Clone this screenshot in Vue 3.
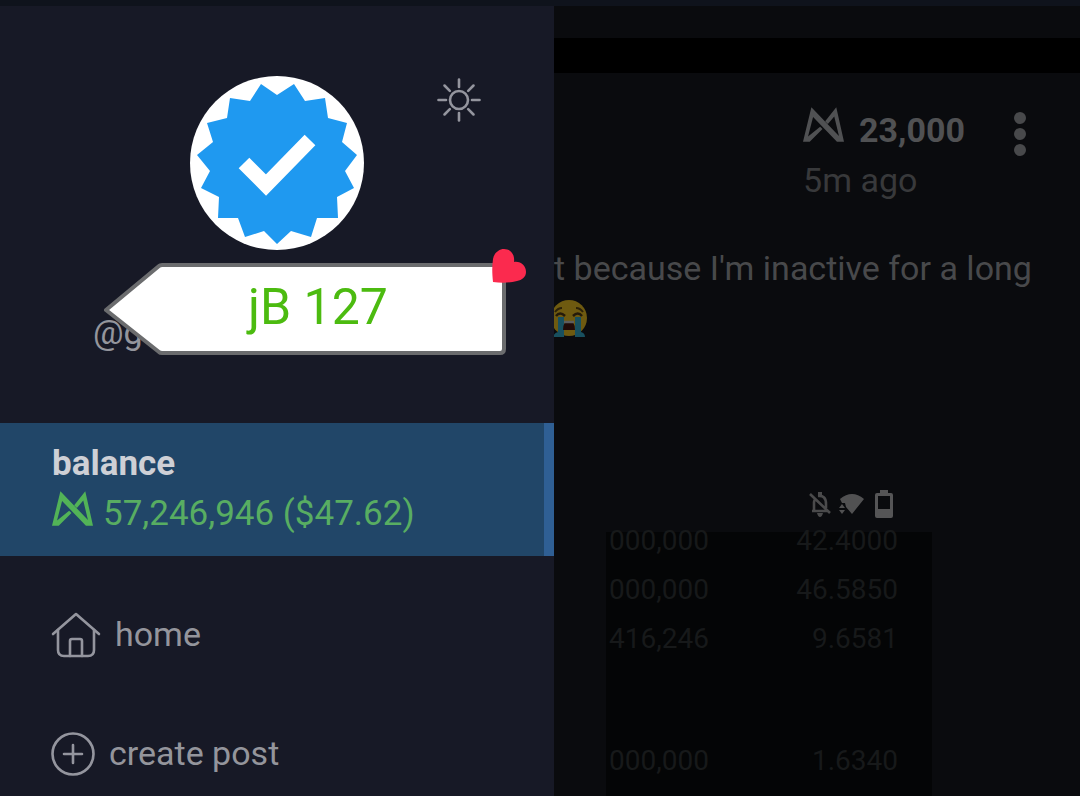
<script setup>
const logo =
  'M0 103 L25 0 L107 86 L93 28 L74 50 L66 42 L99 0 L122 103 L101 103 L30 29 L15 87 L51 58 L58 65 L20 103 Z'

const menu = [
  { id: 'home', label: 'home' },
  { id: 'create', label: 'create post' },
]

const rows = [
  { id: 1, amount: '000,000', price: '42.4000' },
  { id: 2, amount: '000,000', price: '46.5850' },
  { id: 3, amount: '416,246', price: '9.6581' },
  { id: 4, amount: '000,000', price: '1.6340', spaced: true },
]

const rays = [0, 45, 90, 135, 180, 225, 270, 315]
</script>

<template>
  <div class="app">
    <div class="status-strip"></div>
    <div class="columns">
      <aside class="drawer">
        <header class="profile">
          <svg class="avatar" viewBox="0 0 174 174" role="img" aria-label="Profile picture">
            <circle cx="87" cy="87" r="87" fill="#fff" />
            <path
              fill="#1f99f0"
              d="M87 19 L104 8 L115 25 L135 22 L138 42 L157 47 L152 66 L167 79 L155 95 L164 112 L147 121 L148 142 L127 142 L121 161 L101 155 L87 168 L74 155 L55 161 L48 142 L28 142 L29 121 L11 112 L20 95 L7 79 L23 66 L17 47 L37 42 L40 22 L60 25 L71 8 Z"
            />
            <path fill="none" stroke="#fff" stroke-width="15" d="M54 87 L76 109 L120 64" />
          </svg>
          <button class="theme" type="button" aria-label="Toggle theme">
            <svg viewBox="0 0 44 44">
              <circle cx="22" cy="22" r="9" />
              <path v-for="r in rays" :key="r" d="M22 1.5 V9" :transform="`rotate(${r} 22 22)`" />
            </svg>
          </button>
          <p class="handle">@g</p>
          <div class="sticker">
            <svg class="sticker-shape" viewBox="0 0 402 92" preserveAspectRatio="none">
              <path
                d="M2 47 L55 3 Q56 2 58 2 H400 V86 Q400 90 396 90 H58 Q56 90 55 89 Z"
                fill="#fff"
                stroke="#6b6c6e"
                stroke-width="4"
                stroke-linejoin="round"
              />
            </svg>
            <span class="sticker-text">jB 127</span>
            <svg class="heart" viewBox="0 0 34 34">
              <path
                fill="#fb2a4e"
                d="M1 33 C0 24 0 17 1 10 C2 4 7 0 12 0 C19 0 23 6 22 13 C29 12 34 17 34 23 C34 28 30 31 25 32 C17 34 9 34 1 33 Z"
              />
            </svg>
          </div>
        </header>

        <a class="balance" href="#balance">
          <strong>balance</strong>
          <span class="amount">
            <svg class="logo" viewBox="0 0 122 103"><path :d="logo" /></svg>
            <span>57,246,946 ($47.62)</span>
          </span>
        </a>

        <nav class="menu">
          <a v-for="item in menu" :key="item.id" :href="`#${item.id}`">
            <svg v-if="item.id === 'home'" class="icon-home" viewBox="0 0 50 46">
              <path d="M2 22 L25 2 L48 22" />
              <path d="M7 18 V38 Q7 44 13 44 H37 Q43 44 43 38 V18" />
              <path d="M19 44 V29 Q19 27 21 27 H29 Q31 27 31 29 V44" />
            </svg>
            <svg v-else class="icon-create" viewBox="0 0 44 44">
              <circle cx="22" cy="22" r="20.5" />
              <path d="M22 13 V31 M13 22 H31" />
            </svg>
            <span>{{ item.label }}</span>
          </a>
        </nav>
      </aside>

      <main class="feed">
        <div class="feed-gap"></div>
        <article class="post">
          <header class="post-head">
            <div>
              <p class="score">
                <svg class="logo" viewBox="0 0 122 103"><path :d="logo" /></svg>
                <strong>23,000</strong>
              </p>
              <p class="time">5m ago</p>
            </div>
            <button class="more" type="button" aria-label="More options">
              <i></i><i></i><i></i>
            </button>
          </header>
          <p class="body">t because I'm inactive for a long</p>
          <svg class="emoji" viewBox="3 0 36 40" role="img" aria-label="Loudly crying face">
            <circle cx="18" cy="19" r="18" fill="#6e5a10" />
            <path d="M4 13 Q7 9 11 9 M25 9 Q29 9 32 13" fill="none" stroke="#2b2109" stroke-width="2" />
            <path d="M5 17 Q9 12 14 17 M22 17 Q27 12 31 17" fill="none" stroke="#241a0a" stroke-width="2.5" />
            <path d="M7 18 H13 V38 H2 Q3 34 7 33 Z M24 18 H30 V33 Q34 34 34 38 H24 Z" fill="#18505f" />
            <path d="M12 31 Q12 22 18 22 Q24 22 24 31 Z" fill="#210b08" />
            <path d="M13 23 H23" stroke="#5d5d5d" stroke-width="2.5" />
          </svg>

          <div class="phone-icons">
            <svg class="bell" viewBox="0 0 22 26">
              <path d="M1 3 L21 22 M3 20 H19 M5 20 V11 Q5 9 7 8 M9 5 Q17 4 17 13 V17" fill="none" stroke="#4a4a4b" stroke-width="2.6" />
              <path d="M8 22 H14 Q13 26 11 26 Q9 26 8 22 Z M9 1 H13 V5 H9 Z" fill="#4a4a4b" />
            </svg>
            <svg class="wifi" viewBox="0 0 26 24">
              <path d="M1 7 Q13 -3 25 7 L13 22 L7 15 L6 11 H3 Z M0 16 L3 12 L6 16 Z M0 18 H6 L3 22 Z" fill="#515152" />
            </svg>
            <svg class="battery" viewBox="0 0 18 28">
              <path fill-rule="evenodd" d="M5 0 H13 V3 H16 Q18 3 18 5 V26 Q18 28 16 28 H2 Q0 28 0 26 V5 Q0 3 2 3 H5 Z M3 6 V19 H15 V6 Z" fill="#555556" />
            </svg>
          </div>

          <div class="shot">
            <table>
              <tbody>
                <tr v-for="row in rows" :key="row.id" :class="{ spaced: row.spaced }">
                  <td>{{ row.amount }}</td>
                  <td>{{ row.price }}</td>
                </tr>
              </tbody>
            </table>
          </div>
        </article>
      </main>
    </div>
  </div>
</template>

<style>
body {
  margin: 0;
  background: #0a0b0e;
}
</style>

<style scoped>
.app {
  display: flex;
  flex-direction: column;
  height: 100vh;
  overflow: hidden;
  font-family: Roboto, 'Liberation Sans', sans-serif;
  font-size: 34px;
  line-height: 50px;
  color: #94959c;
}
p {
  margin: 0;
}
a {
  color: inherit;
  text-decoration: none;
}
button {
  padding: 0;
  border: 0;
  background: none;
}
svg {
  display: block;
  flex: none;
}
.status-strip {
  flex: none;
  height: 6px;
  background: #0f131c;
}
.columns {
  flex: 1;
  min-height: 0;
  display: grid;
  grid-template-columns: 554fr 526fr;
}
.drawer {
  min-width: 0;
  background: #171926;
}
.profile {
  position: relative;
  display: grid;
  grid-template-columns: 1fr auto 1fr;
  grid-template-rows: 230px 187px;
}
.avatar {
  grid-column: 2;
  width: 174px;
  height: 174px;
  margin-top: 70px;
}
.theme {
  grid-column: 3;
  justify-self: center;
  align-self: start;
  width: 44px;
  height: 44px;
  margin-top: 72px;
}
.theme svg {
  width: 44px;
  height: 44px;
  fill: none;
  stroke: #94959e;
  stroke-width: 2.6;
  stroke-linecap: round;
}
.handle {
  grid-column: 1 / -1;
  padding: 71px 0 0 93px;
}
.sticker {
  position: absolute;
  left: 104px;
  right: 48px;
  top: 257px;
  height: 92px;
}
.sticker-shape {
  position: absolute;
  inset: 0;
  width: 100%;
  height: 100%;
}
.sticker-text {
  position: relative;
  display: block;
  padding-left: 26px;
  text-align: center;
  font-size: 50px;
  line-height: 88px;
  color: #4cbb10;
}
.heart {
  position: absolute;
  top: -14px;
  right: -20px;
  width: 34px;
  height: 34px;
}
.balance {
  display: flex;
  flex-direction: column;
  padding: 16px 0 17px 52px;
  border-right: 10px solid #2f5f94;
  background: #214668;
  font-size: 35px;
}
.balance strong {
  color: #ced0d6;
}
.amount,
.score {
  display: flex;
  align-items: center;
}
.logo {
  width: 41px;
  height: 35px;
  margin-bottom: 12px;
  fill: currentColor;
}
.amount {
  gap: 10px;
  color: #58ad62;
}
.amount .logo {
  fill: #52b357;
}
.menu {
  display: flex;
  flex-direction: column;
  gap: 67px;
  padding: 53px 51px 0;
}
.menu a {
  display: flex;
  align-items: center;
  gap: 14px;
}
.menu span {
  padding-bottom: 2px;
}
.menu svg {
  fill: none;
  stroke: #94959e;
  stroke-width: 2.6;
  stroke-linecap: round;
  stroke-linejoin: round;
}
.icon-home {
  width: 50px;
  height: 46px;
}
.icon-create {
  width: 44px;
  height: 44px;
}
.feed {
  min-width: 0;
  overflow: hidden;
  padding-top: 32px;
  background: #0a0b0e;
}
.feed-gap {
  height: 35px;
  background: #000;
}
.post {
  padding-top: 32px;
  color: #434345;
}
.post-head {
  display: flex;
  justify-content: flex-end;
  gap: 49px;
  padding-right: 54px;
}
.score {
  gap: 15px;
  color: #505153;
}
.time {
  color: #38393b;
}
.more {
  display: flex;
  flex-direction: column;
  gap: 4px;
  height: 44px;
  margin-top: 7px;
}
.more i {
  width: 12px;
  height: 12px;
  border-radius: 50%;
  background: #48494b;
}
.body {
  margin-top: 38px;
  white-space: nowrap;
  color: #48494b;
}
.emoji {
  width: 36px;
  height: 40px;
  margin: 6px 0 10px;
}
.phone-icons {
  display: flex;
  align-items: center;
  gap: 8px;
  height: 28px;
  margin: 151px 0 0 255px;
}
.bell {
  width: 22px;
  height: 26px;
}
.wifi {
  width: 26px;
  height: 24px;
}
.battery {
  width: 18px;
  height: 28px;
  margin-left: 2px;
}
.shot {
  width: 326px;
  height: 300px;
  margin: 14px 0 0 52px;
  background: #040506;
}
table {
  position: relative;
  top: -16px;
  width: 292px;
  border-collapse: collapse;
  font-size: 28px;
  line-height: 49px;
  color: #17191a;
}
td {
  padding: 0 0 0 3px;
}
td + td {
  padding: 0;
  text-align: right;
}
.spaced td {
  padding-top: 73px;
}
</style>
